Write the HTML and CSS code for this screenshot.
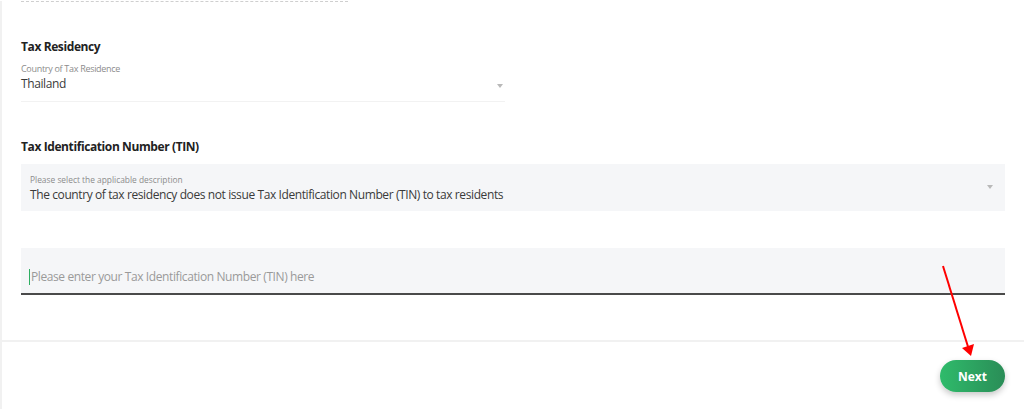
FILE: index.html
```html
<!DOCTYPE html>
<html lang="en">

<head>
    <meta charset="UTF-8">
    <meta name="viewport" content="width=device-width, initial-scale=1.0">
    <title>Tax Information</title>
    <link rel="stylesheet" href="styles.css">
</head>

<body>
    <div class="page">
        <div class="form-body">
            <div class="divider"></div>

            <h3 class="section-title first">Tax Residency</h3>
            <div class="plain-select">
                <span class="field-label">Country of Tax Residence</span>
                <span class="field-value">Thailand</span>
                <span class="caret-down"></span>
            </div>

            <h3 class="section-title">Tax Identification Number (TIN)</h3>
            <div class="filled-select">
                <span class="field-label small">Please select the applicable description</span>
                <span class="field-value">The country of tax residency does not issue Tax Identification Number (TIN) to tax residents</span>
                <span class="caret-down"></span>
            </div>

            <div class="text-input">
                <span class="cursor"></span>
                <span class="placeholder">Please enter your Tax Identification Number (TIN) here</span>
            </div>
        </div>

        <div class="form-footer">
            <button type="button" class="btn-next">Next</button>
        </div>
    </div>

    <!-- annotation arrow drawn over the screenshot -->
    <svg class="annotation" width="60" height="100" viewBox="0 0 60 100">
        <line x1="13" y1="6" x2="39" y2="90" stroke="#ff0000" stroke-width="2" />
        <polygon points="32,88 44,84 41,96" fill="#ff0000" />
    </svg>
</body>

</html>
```

FILE: styles.css
```css
body {
    font-family: "Open Sans", Arial, sans-serif;
    margin: 0;
    padding: 0;
    background-color: white;
    color: #333;
}

.page {
    border-left: 2px solid #f1f1f1;
    min-height: 409px;
    box-sizing: border-box;
}

.form-body {
    padding: 0 19px 0 19px;
    height: 339px;
    box-sizing: border-box;
}

/* dashed line left from the previous block */
.divider {
    width: 327px;
    height: 0;
    margin-top: 1px;
    border-top: 1px dashed #cfcfcf;
}

.section-title {
    margin: 37px 0 8px;
    font-size: 12px;
    line-height: 16px;
    font-weight: 700;
    letter-spacing: -0.4px;
    color: #222;
}

.field-label {
    display: block;
    font-size: 9px;
    line-height: 12px;
    letter-spacing: -0.3px;
    color: #8c8c8c;
}

.field-label.small {
    font-size: 8.4px;
    line-height: 10px;
    letter-spacing: 0;
    margin-bottom: 1px;
}

.field-value {
    display: block;
    font-size: 12px;
    line-height: 18px;
    letter-spacing: -0.4px;
    color: #3a3a3a;
}

.plain-select {
    position: relative;
    width: 484px;
    padding-bottom: 8px;
    border-bottom: 1px solid #f2f2f2;
}

.caret-down {
    position: absolute;
    width: 0;
    height: 0;
    border-left: 3.5px solid transparent;
    border-right: 3.5px solid transparent;
    border-top: 4px solid #b9b9b9;
}

.plain-select .caret-down {
    right: 2px;
    top: 21px;
}

.filled-select {
    position: relative;
    margin-top: 9px;
    height: 47px;
    padding: 11px 9px 0;
    box-sizing: border-box;
    background-color: #f5f6f8;
}

.filled-select .caret-down {
    right: 12px;
    top: 21px;
}

.text-input {
    display: flex;
    align-items: center;
    margin-top: 37px;
    height: 47px;
    padding: 13px 8px 0;
    box-sizing: border-box;
    background-color: #f5f6f8;
    border-bottom: 2px solid #4a4a4a;
}

.cursor {
    width: 1px;
    height: 16px;
    margin-right: 1px;
    background-color: #2eae62;
}

.placeholder {
    font-size: 12px;
    line-height: 18px;
    letter-spacing: -0.4px;
    color: #9a9a9a;
}

.form-footer {
    border-top: 2px solid #f1f1f1;
    display: flex;
    justify-content: flex-end;
    padding: 18px 19px 0 0;
}

.btn-next {
    width: 65px;
    height: 32px;
    border: none;
    border-radius: 16px;
    background: linear-gradient(90deg, #2fbb6b, #2a8d57);
    color: white;
    font-family: "Open Sans", Arial, sans-serif;
    font-size: 12px;
    font-weight: 700;
    box-shadow: 0 3px 6px rgba(0, 0, 0, 0.22);
    cursor: pointer;
}

.annotation {
    position: absolute;
    left: 930px;
    top: 260px;
}
```
